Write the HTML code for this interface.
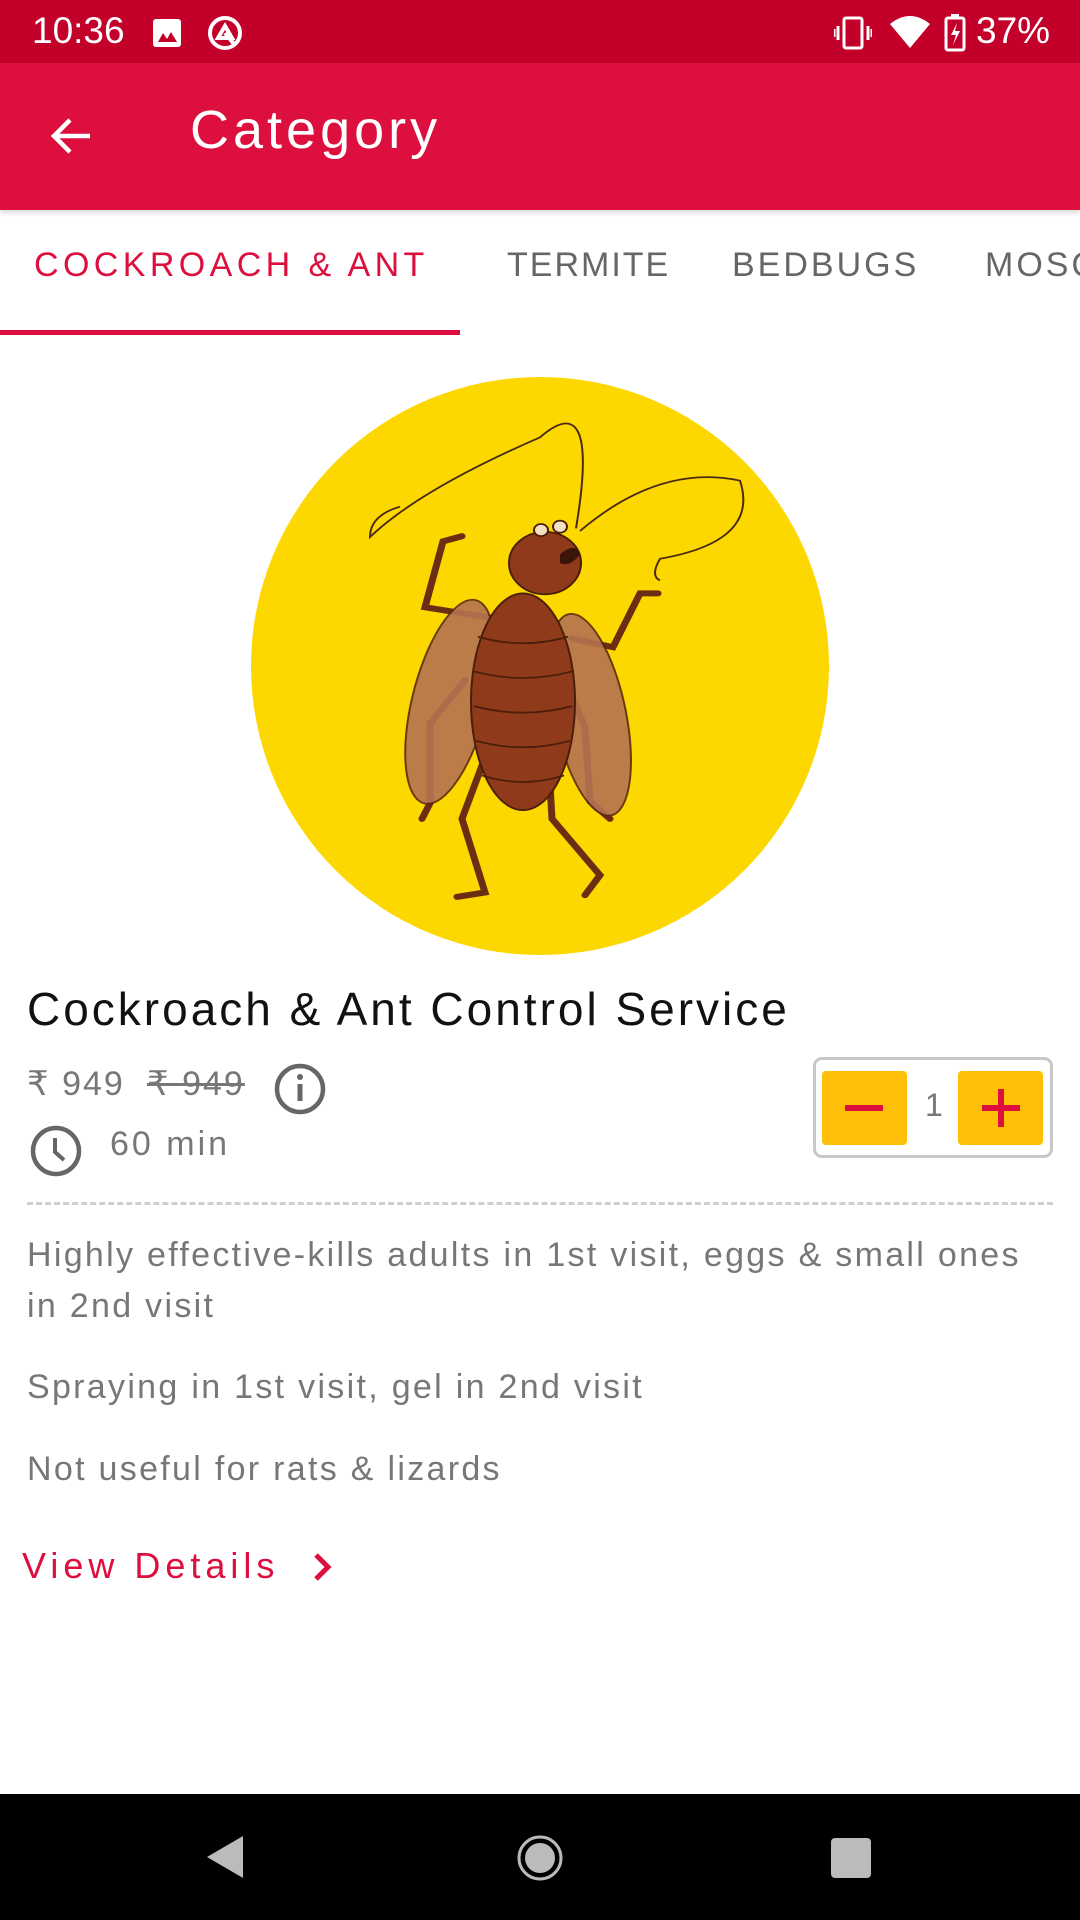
<!DOCTYPE html>
<html><head><meta charset="utf-8"><style>
*{margin:0;padding:0;box-sizing:border-box}
body{width:1080px;height:1920px;position:relative;background:#fff;font-family:"Liberation Sans",sans-serif;overflow:hidden}
.abs{position:absolute}
.status{left:0;top:0;width:1080px;height:63px;background:#c2002a;color:#fff}
.appbar{left:0;top:63px;width:1080px;height:147px;background:#dc0f3e;box-shadow:0 3px 5px rgba(0,0,0,.15)}
.tabs{left:0;top:210px;width:1080px;height:130px;overflow:hidden}
.tab{top:36px;font-size:34px;letter-spacing:3px;color:#666;white-space:nowrap}
.grey{color:#777}
</style></head><body>
<div class="abs status">
  <div class="abs" style="left:32px;top:10px;font-size:37px">10:36</div>
  <svg class="abs" style="left:152px;top:18px" width="30" height="30" viewBox="0 0 30 30"><rect x="1" y="1" width="28" height="28" rx="3" fill="#fff"/><path d="M6 24 L11 15 L15 21 L19 14 L25 24Z" fill="#c2002a"/></svg>
  <svg class="abs" style="left:206px;top:14px" width="38" height="38" viewBox="0 0 38 38"><circle cx="19" cy="19" r="15" fill="none" stroke="#fff" stroke-width="4"/><path d="M12 24 L19 12 L26 24Z M19 19 L28 30" fill="none" stroke="#fff" stroke-width="4"/></svg>
  <svg class="abs" style="left:834px;top:16px" width="38" height="34" viewBox="0 0 38 34"><rect x="10" y="2" width="18" height="30" rx="2" fill="none" stroke="#fff" stroke-width="3"/><path d="M4 10v14M34 10v14M0 13v8M38 13v8" stroke="#fff" stroke-width="3"/></svg>
  <svg class="abs" style="left:890px;top:14px" width="40" height="36" viewBox="0 0 40 36"><path d="M0 10 Q20 -6 40 10 L20 34Z" fill="#fff"/></svg>
  <svg class="abs" style="left:944px;top:14px" width="22" height="38" viewBox="0 0 22 38"><rect x="2" y="4" width="18" height="32" rx="2" fill="none" stroke="#fff" stroke-width="3"/><rect x="7" y="0" width="8" height="5" fill="#fff"/><path d="M13 9 L7 21 L12 21 L9 31 L16 17 L11 17Z" fill="#fff"/></svg>
  <div class="abs" style="left:976px;top:10px;font-size:37px">37%</div>
</div>
<div class="abs appbar">
  <svg class="abs" style="left:48px;top:50px" width="46" height="46" viewBox="0 0 46 46"><path d="M42 23H6M22 7L6 23L22 39" fill="none" stroke="#fff" stroke-width="4.5"/></svg>
  <div class="abs" style="left:190px;top:36px;font-size:54px;letter-spacing:4px;color:#fff">Category</div>
</div>
<div class="abs tabs">
<div class="abs tab" style="left:34px;color:#dc0f3e;letter-spacing:4.4px">COCKROACH &amp; ANT</div>
<div class="abs tab" style="left:507px;letter-spacing:2px">TERMITE</div>
<div class="abs tab" style="left:732px">BEDBUGS</div>
<div class="abs tab" style="left:985px">MOSQUITO</div>
<div class="abs" style="left:0;top:120px;width:460px;height:5px;background:#dc0f3e"></div>
</div>

<svg class="abs" style="left:0;top:0" width="1080" height="1000" viewBox="0 0 1080 1000">
  <circle cx="540" cy="666" r="289" fill="#fdd700"/>
  <g transform="translate(0,420) scale(1,0.867) translate(0,-420)">
  <g fill="none" stroke="#4a2a14" stroke-width="2">
    <path d="M576 545 Q600 380 540 440 Q420 500 370 555 Q370 530 400 520"/>
    <path d="M580 548 Q660 470 740 490 Q760 560 660 580 Q650 600 660 605"/>
  </g>
  <g stroke="#6b2e12" stroke-width="7" stroke-linecap="round" fill="none">
    <path d="M490 648 L425 636 L443 560 L462 554"/>
    <path d="M572 672 L613 682 L640 620 L658 620"/>
    <path d="M465 720 L430 770 L430 862 L422 880"/>
    <path d="M565 720 L585 775 L590 860 L610 880"/>
    <path d="M488 800 L462 880 L485 965 L457 970"/>
    <path d="M548 800 L552 880 L600 945 L585 968"/>
  </g>
  <ellipse cx="450" cy="745" rx="38" ry="120" transform="rotate(12 450 745)" fill="#b57352" stroke="#5a2a12" stroke-width="2" opacity=".9"/>
  <ellipse cx="590" cy="760" rx="36" ry="118" transform="rotate(-10 590 760)" fill="#b57352" stroke="#5a2a12" stroke-width="2" opacity=".9"/>
  <ellipse cx="523" cy="745" rx="52" ry="125" fill="#8f3a1a" stroke="#4a1e0a" stroke-width="2"/>
  <g stroke="#4a1e0a" stroke-width="2" fill="none">
    <path d="M478 670 Q523 685 568 670M474 710 Q523 725 572 710M474 750 Q523 765 572 750M476 790 Q523 805 570 790M482 830 Q523 845 564 830"/>
  </g>
  <circle cx="545" cy="585" r="36" fill="#8f3a1a" stroke="#4a1e0a" stroke-width="2"/>
  <circle cx="541" cy="547" r="7" fill="#f3e0c0" stroke="#4a1e0a" stroke-width="2"/>
  <circle cx="560" cy="543" r="7" fill="#f3e0c0" stroke="#4a1e0a" stroke-width="2"/>
  <path d="M560 575 Q575 560 580 575 Q570 590 560 585Z" fill="#3a1508"/>
  </g>
</svg>

<div class="abs" style="left:27px;top:982px;font-size:46px;letter-spacing:3px;color:#111;white-space:nowrap">Cockroach &amp; Ant Control Service</div>
<div class="abs grey" style="left:27px;top:1064px;font-size:34px;letter-spacing:2px">₹ 949</div>
<div class="abs grey" style="left:147px;top:1064px;font-size:34px;letter-spacing:2px;text-decoration:line-through">₹ 949</div>
<svg class="abs" style="left:273px;top:1062px" width="54" height="54" viewBox="0 0 54 54"><circle cx="27" cy="27" r="23" fill="none" stroke="#666" stroke-width="4.5"/><rect x="24.5" y="22" width="5" height="17" fill="#666"/><circle cx="27" cy="15" r="3" fill="#666"/></svg>
<svg class="abs" style="left:29px;top:1124px" width="54" height="54" viewBox="0 0 54 54"><circle cx="27" cy="27" r="23" fill="none" stroke="#666" stroke-width="4.5"/><path d="M26 14V28L35 36" fill="none" stroke="#666" stroke-width="4"/></svg>
<div class="abs grey" style="left:110px;top:1125px;font-size:34px;letter-spacing:3px">60 min</div>
<div class="abs" style="left:813px;top:1057px;width:240px;height:101px;border:3px solid #c8c8c8;border-radius:9px"></div>
<div class="abs" style="left:822px;top:1071px;width:85px;height:74px;background:#fdc007;border-radius:4px"></div>
<div class="abs" style="left:958px;top:1071px;width:85px;height:74px;background:#fdc007;border-radius:4px"></div>
<div class="abs" style="left:845px;top:1105px;width:38px;height:6px;background:#dc0f3e"></div>
<div class="abs" style="left:982px;top:1105px;width:38px;height:6px;background:#dc0f3e"></div>
<div class="abs" style="left:998px;top:1089px;width:6px;height:38px;background:#dc0f3e"></div>
<div class="abs grey" style="left:925px;top:1087px;font-size:32px">1</div>
<div class="abs" style="left:27px;top:1202px;width:1026px;height:0;border-top:3px dashed #cfcfcf"></div>
<div class="abs grey" style="left:27px;top:1230px;width:1005px;font-size:34px;letter-spacing:2.3px;line-height:51px">Highly effective-kills adults in 1st visit, eggs &amp; small ones in 2nd visit</div>
<div class="abs grey" style="left:27px;top:1368px;font-size:34px;letter-spacing:2.3px">Spraying in 1st visit, gel in 2nd visit</div>
<div class="abs grey" style="left:27px;top:1450px;font-size:34px;letter-spacing:2.3px">Not useful for rats &amp; lizards</div>
<div class="abs" style="left:22px;top:1545px;font-size:36px;color:#dc0f3e;letter-spacing:5px">View Details</div>
<svg class="abs" style="left:310px;top:1552px" width="26" height="30" viewBox="0 0 26 30"><path d="M6 3L18 15L6 27" fill="none" stroke="#dc0f3e" stroke-width="5"/></svg>

<div class="abs" style="left:0;top:1794px;width:1080px;height:126px;background:#000">
  <svg class="abs" style="left:205px;top:40px" width="40" height="46" viewBox="0 0 40 46"><path d="M38 2V44L2 23Z" fill="#bbb"/></svg>
  <svg class="abs" style="left:516px;top:40px" width="48" height="48" viewBox="0 0 48 48"><circle cx="24" cy="24" r="21" fill="none" stroke="#bbb" stroke-width="3"/><circle cx="24" cy="24" r="15" fill="#bbb"/></svg>
  <div class="abs" style="left:831px;top:44px;width:40px;height:40px;background:#bbb;border-radius:4px"></div>
</div>
</body></html>
